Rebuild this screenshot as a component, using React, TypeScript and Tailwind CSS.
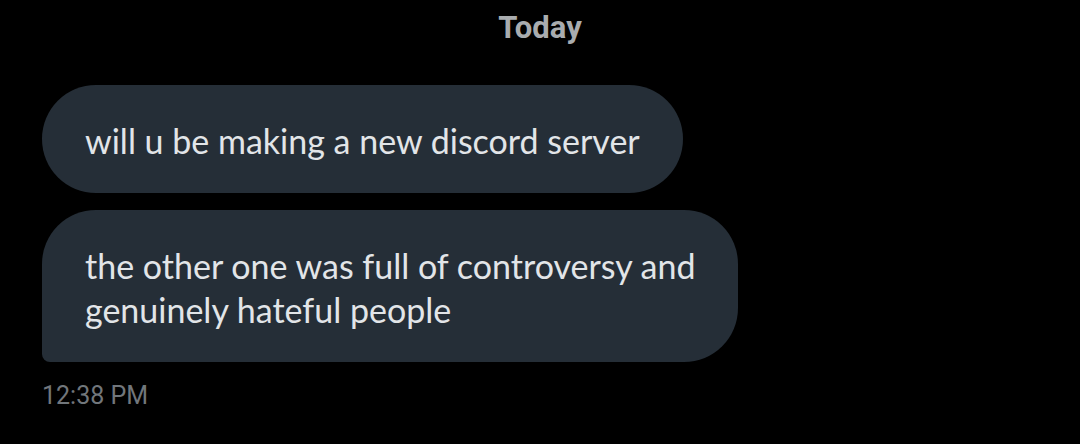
const Bubble = ({ children, className }: { children: React.ReactNode; className?: string }) => (
  <div
    className={`w-fit bg-[#252e37] text-[#e2e5e8] px-[43px] pt-[34px] pb-[30px] text-[34px] leading-[44px] ${className ?? ''}`}
    style={{ fontFamily: 'Lato, "Noto Sans", sans-serif' }}
  >
    {children}
  </div>
);

export default function App() {
  return (
    <div className="w-[1080px] h-[444px] bg-black overflow-hidden" style={{ fontFamily: 'Roboto, "Liberation Sans", sans-serif' }}>
      <div className="pt-[9px] text-center text-[31px] font-bold text-[#a9acaf] leading-[38px]">Today</div>
      <div className="pl-[42px] pt-[38px] flex flex-col gap-[17px]">
        <Bubble className="rounded-[54px]">will u be making a new discord server</Bubble>
        <Bubble className="rounded-[54px] rounded-bl-[8px] whitespace-nowrap">
          the other one was full of controversy and
          <br />
          genuinely hateful people
        </Bubble>
      </div>
      <div className="pl-[42px] pt-[19px] text-[25px] leading-[30px] text-[#71767b]">12:38 PM</div>
    </div>
  );
}
